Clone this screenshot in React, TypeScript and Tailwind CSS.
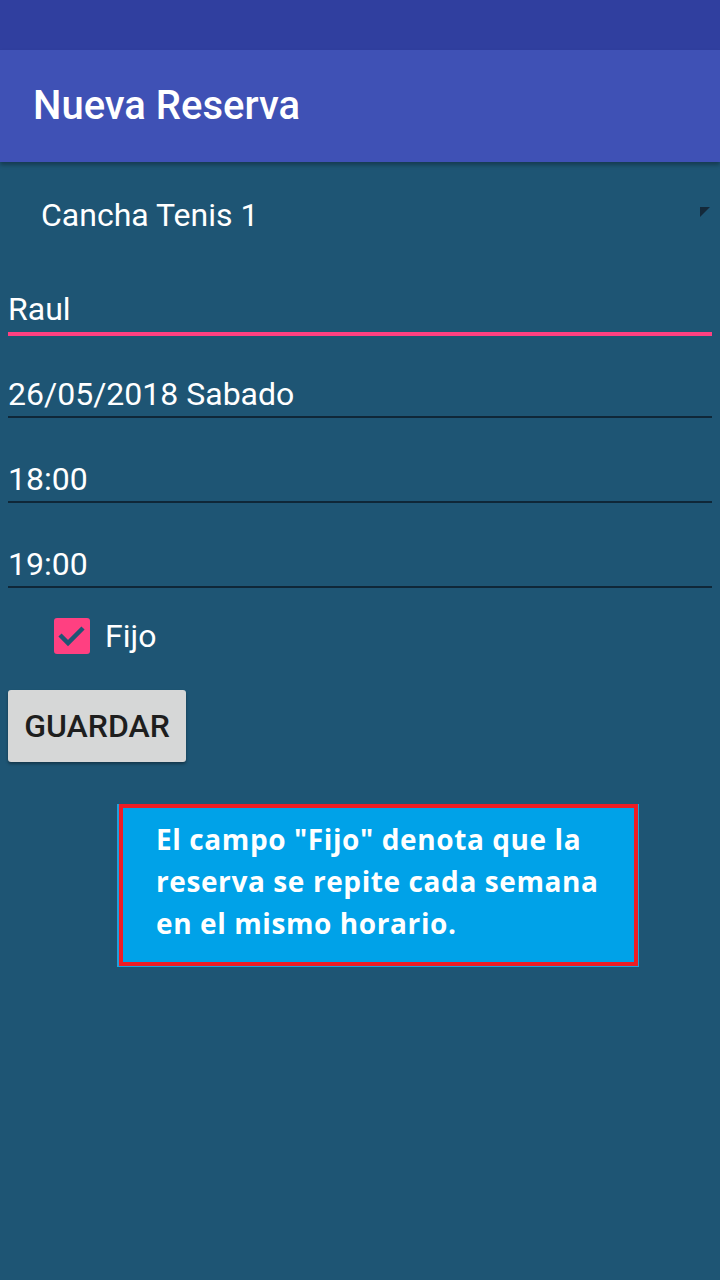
const fields = ["26/05/2018 Sabado", "18:00", "19:00"];

const Field = ({ value }: { value: string }) => (
  <div className="mt-[45px] border-b-2 border-[#0f2738] pb-[6px] first:mt-[42px]">
    <p className="text-[32px] leading-none text-white">{value}</p>
  </div>
);

export default function App() {
  return (
    <div className="flex min-h-[1280px] flex-col bg-[#1e5574] font-['Roboto',sans-serif]">
      <div className="h-[50px] bg-[#303f9f]" />
      <header className="relative z-10 flex h-[112px] items-center bg-[#3f51b5] px-[33px] shadow-[0_3px_4px_rgba(0,0,0,0.3)]">
        <h1 className="text-[40px] font-medium leading-none text-white">Nueva Reserva</h1>
      </header>

      <main className="flex flex-col px-2">
        {/* spinner */}
        <div className="relative mt-[37px]">
          <p className="pl-[33px] text-[32px] leading-none text-white">Cancha Tenis 1</p>
          <svg
            className="absolute right-[2px] top-[8px]"
            width="10"
            height="10"
            viewBox="0 0 10 10"
          >
            <polygon points="0,0 10,0 0,10" fill="#14293a" />
          </svg>
        </div>

        <div className="mt-[62px] border-b-4 border-[#ff4081] pb-[7px]">
          <p className="text-[32px] leading-none text-white">Raul</p>
        </div>

        <div className="flex flex-col">
          {fields.map((f) => (
            <Field key={f} value={f} />
          ))}
        </div>

        <label className="mt-[30px] flex items-center gap-[15px] pl-[46px]">
          <span className="flex h-[36px] w-[36px] items-center justify-center rounded-[3px] bg-[#ff4081]">
            <svg width="36" height="36" viewBox="0 0 36 36">
              <polyline
                points="6,17 14,25 29,10"
                fill="none"
                stroke="#1e5574"
                strokeWidth="4.5"
              />
            </svg>
          </span>
          <span className="text-[32px] leading-none text-white">Fijo</span>
        </label>

        <button className="mt-[36px] flex h-[72px] w-[178px] items-center justify-center rounded-[3px] bg-[#d6d7d7] text-[32px] font-medium leading-none text-[#1e1e1e] shadow-[0_2px_3px_rgba(0,0,0,0.35)]">
          GUARDAR
        </button>

        <div className="ml-[109px] mt-[42px] w-[522px] border-b border-l-2 border-r border-[#1fa0dc]">
          <div className="h-[162px] border-4 border-[#ed1c24] bg-[#00a2e8] pl-[33px] pt-[10px]">
            <p className="w-[455px] font-['Open_Sans',sans-serif] text-[28px] font-bold leading-[42px] tracking-[0.6px] text-white">
              El campo "Fijo" denota que la reserva se repite cada semana en el mismo horario.
            </p>
          </div>
        </div>
      </main>
    </div>
  );
}
